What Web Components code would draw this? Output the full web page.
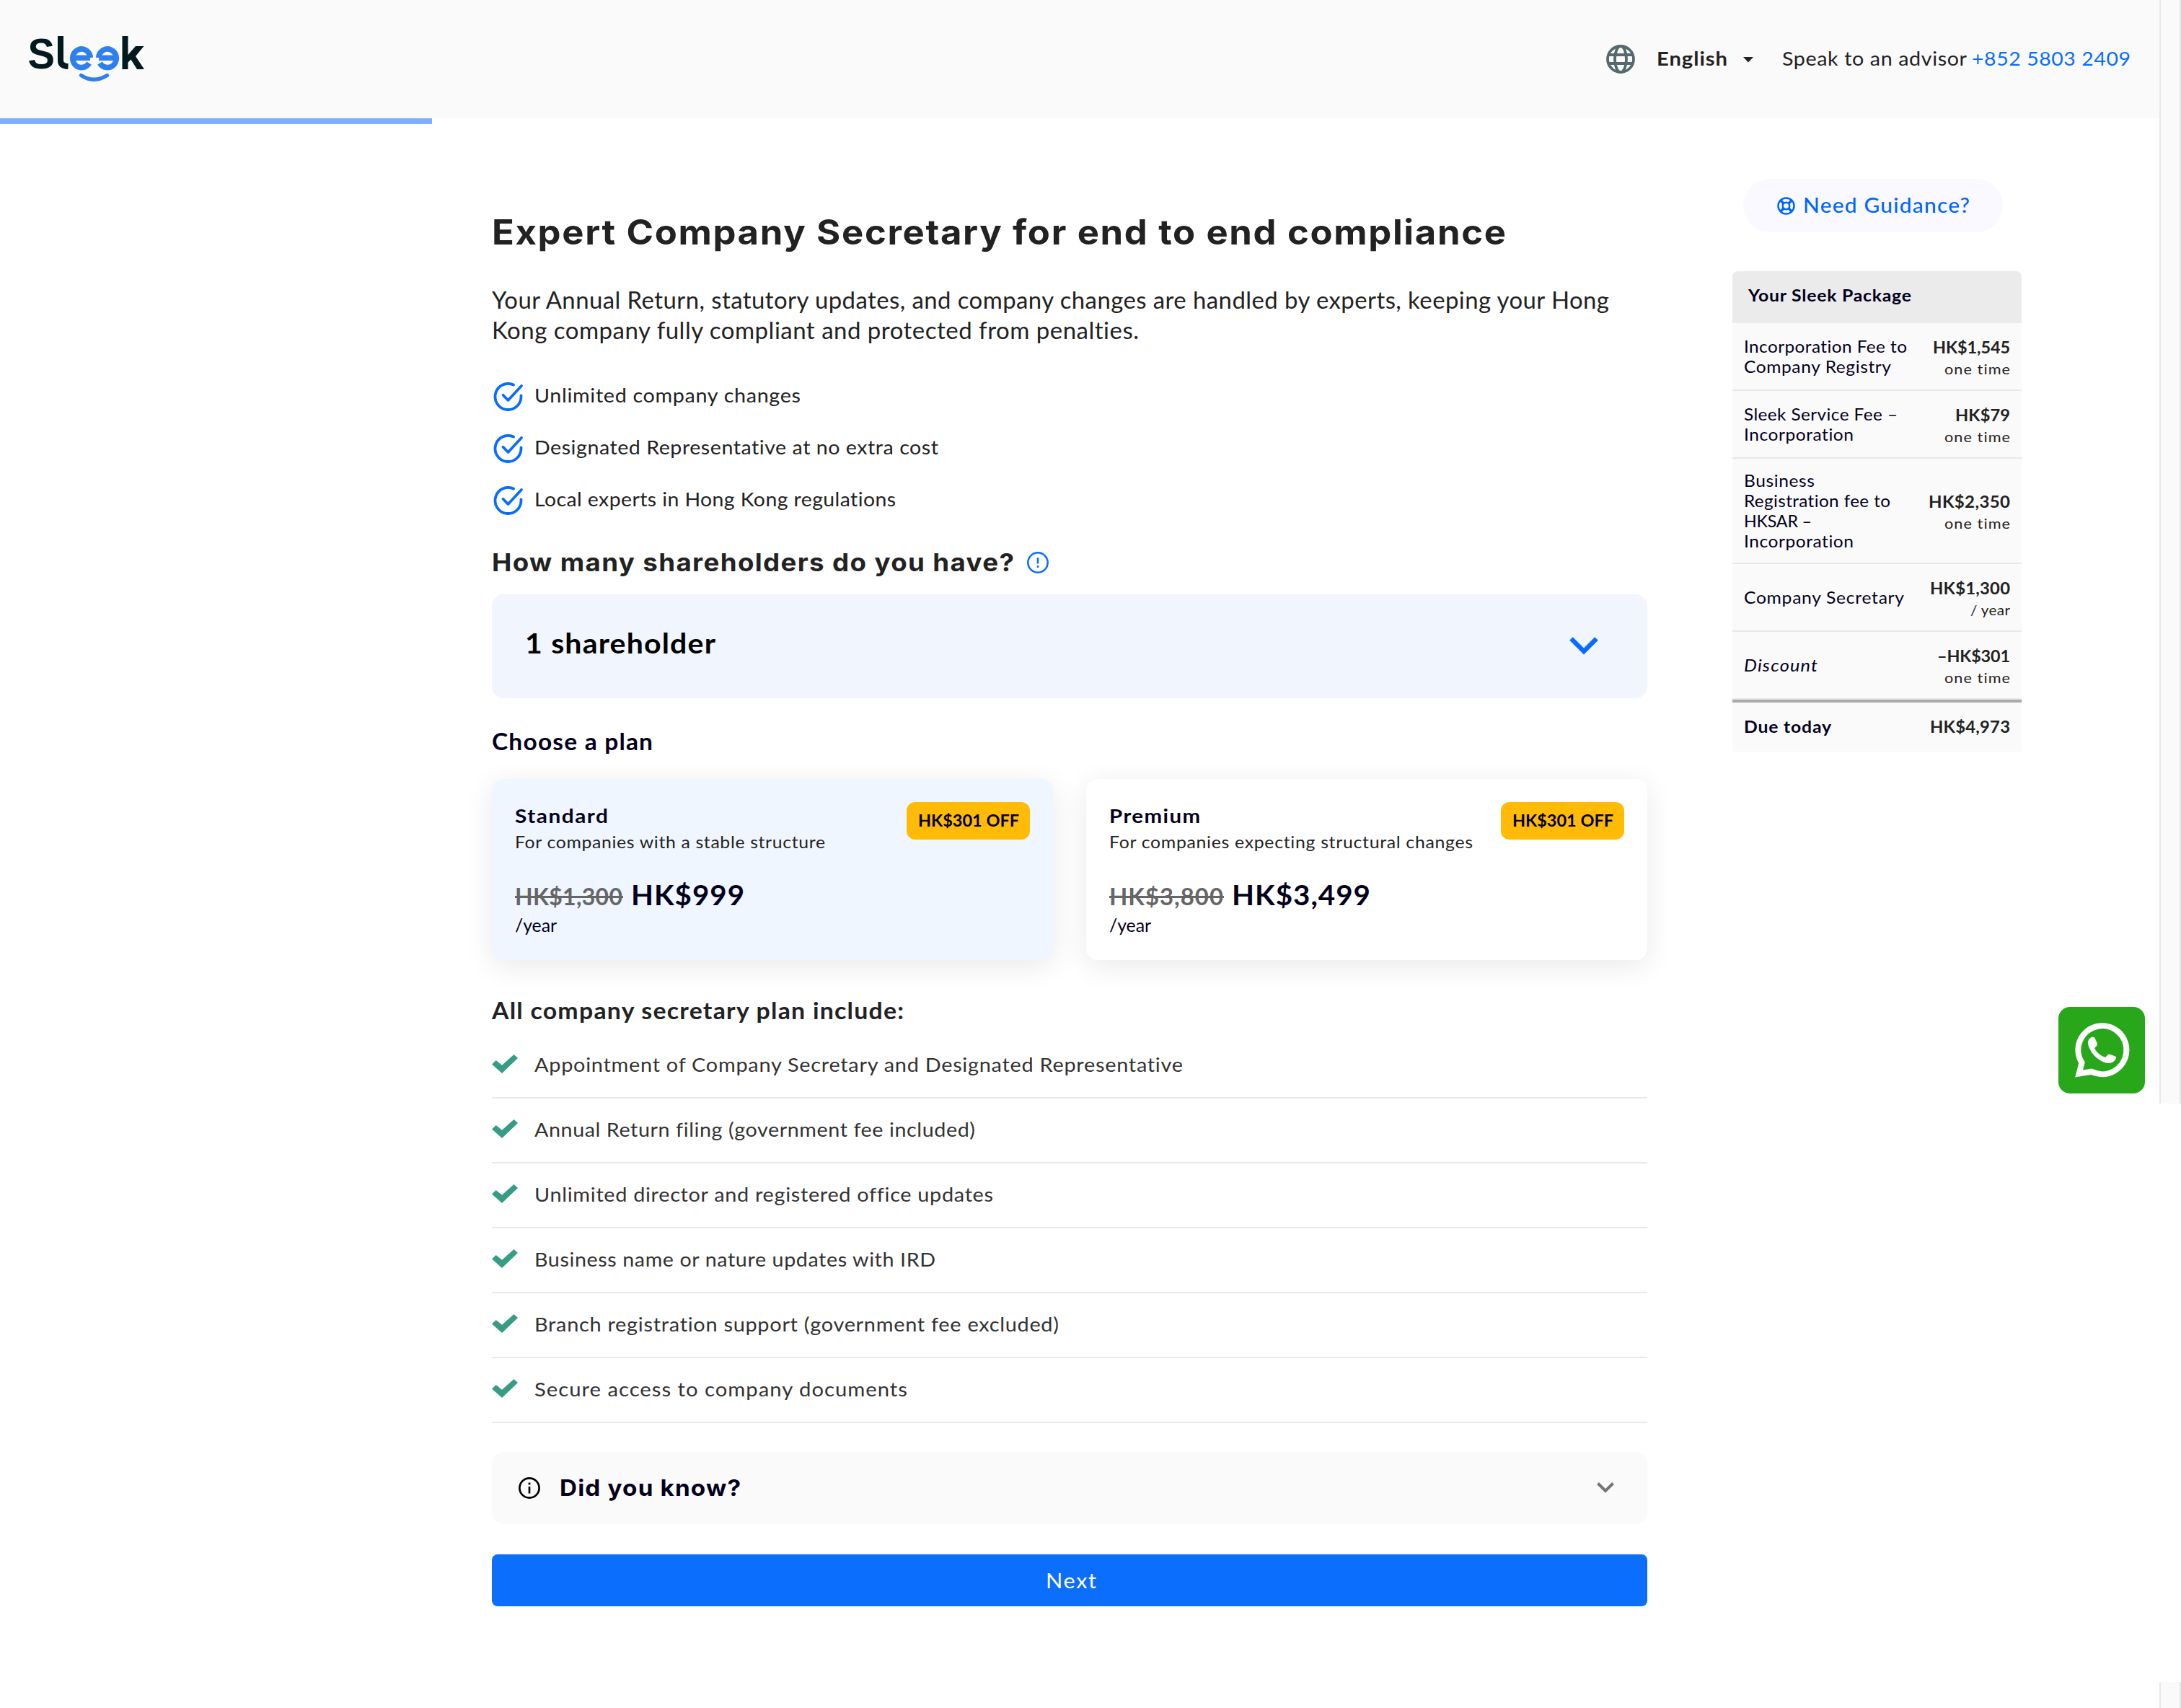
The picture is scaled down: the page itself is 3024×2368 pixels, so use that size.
<!DOCTYPE html>
<html lang="en">
<head>
<meta charset="utf-8">
<title>Sleek - Company Secretary</title>
<style>
  body {
    margin: 0;
    display: flex;
    background: #fff;
    color: #222;
    font-family: Lato, "Open Sans", sans-serif;
    font-variant-ligatures: none;
    --heading-font: Inter, "Open Sans", sans-serif;
    --ink: #03001c;
    --blue: #0a6cff;
  }
</style>
</head>
<body>
<sleek-page></sleek-page>
<scroll-rail></scroll-rail>
<whatsapp-button></whatsapp-button>

<script>
function define(name, html) {
  customElements.define(name, class extends HTMLElement {
    constructor() {
      super();
      this.attachShadow({ mode: 'open' });
      this.shadowRoot.innerHTML = html;
    }
  });
}

// One line of text that fills the given width: half by tracking, half by scaling
class FitText extends HTMLElement {
  constructor() {
    super();
    this.attachShadow({ mode: 'open' });
    this.shadowRoot.innerHTML = `
      <style>
        :host { display: block; white-space: nowrap; }
        span { display: inline-block; line-height: inherit; vertical-align: top; transform-origin: 0 0; }
      </style>
      <span><slot></slot></span>
    `;
  }

  connectedCallback() {
    const width = Number(this.getAttribute('w'));
    const count = this.textContent.length;
    const span = this.shadowRoot.querySelector('span');
    const natural = span.getBoundingClientRect().width;
    if (!width || !natural || count < 2) return;
    const spacing = (width - natural) / 2 / (count - 1);
    const scale = width / (natural + spacing * (count - 1));
    this.style.width = `${width}px`;
    span.style.letterSpacing = `${spacing.toFixed(3)}px`;
    span.style.marginRight = `${(-spacing).toFixed(3)}px`;
    span.style.transform = `scaleX(${scale.toFixed(4)})`;
  }
}

define('sleek-logo', `
  <style>
    :host { display: block; width: 168px; height: 104px; margin-left: 38px; }
    text { font: 700 60px "Liberation Sans", sans-serif; fill: #001a1f; }
  </style>
  <svg width="168" height="104" viewBox="38 30 168 104">
    <text x="38.5" y="95" textLength="37.5" lengthAdjust="spacingAndGlyphs">S</text>
    <path d="M84 50V84Q84 91.500 94.500 92" fill="none" stroke="#001a1f" stroke-width="8"/>
    <g fill="none" stroke="#2f80ed" stroke-width="7.6">
      <path d="M125 80.3H101M125.300 80A12.300 12.800 0 1 0 123.500 87.500"/>
      <path d="M137 80.3H161M136.700 80A12.300 12.800 0 1 1 138.500 87.500"/>
      <path d="M112.500 104.500Q130 116 148.500 104.500" stroke-width="5.200" stroke-linecap="round"/>
    </g>
    <path d="M173.500 50V96" fill="none" stroke="#001a1f" stroke-width="8"/>
    <path d="M188 64H199.500L188 78L200 96H190L181.500 82.500L177 87V76.500Z" fill="#001a1f"/>
  </svg>
`);

define('page-header', `
  <style>
    :host { display: block; }
    header { height: 164px; background: #fafafa; display: flex; align-items: center; }
    .right { margin-left: auto; display: flex; align-items: center; height: 100%; margin-right: 40px; font-size: 27.5px; line-height: 34px; }
    .right svg { display: block; }
    fit-text { margin-bottom: 3px; }
    .lang { margin-left: 30px; font-weight: 700; }
    .caret { margin: 2px 40px 0 22px; }
    .phone { margin-left: 7px; color: var(--blue); }
    .progress { width: 599px; height: 8px; background: #7eb0ff; }
  </style>
  <header>
    <sleek-logo></sleek-logo>
    <div class="right">
      <svg width="40" height="40" viewBox="0 0 40 40" fill="none" stroke="#546a6e" stroke-width="3.800">
        <circle cx="20" cy="20" r="18"/><ellipse cx="20" cy="20" rx="8" ry="18"/><path d="M3.500 14H36.500M3.500 26H36.500"/>
      </svg>
      <fit-text class="lang" w="98">English</fit-text>
      <svg class="caret" width="14" height="8"><path d="M0 0H14L7 7.500Z" fill="#222"/></svg>
      <fit-text w="256">Speak to an advisor</fit-text>
      <fit-text class="phone" w="220">+852 5803 2409</fit-text>
    </div>
  </header>
  <div class="progress"></div>
`);

define('benefit-item', `
  <style>
    :host { display: flex; align-items: center; height: 40px; font-size: 27.5px; line-height: 34px; }
    svg { width: 44px; height: 40px; margin: 0 15px 1px 0; }
    ::slotted(fit-text) { padding-bottom: 5px; }
  </style>
  <svg viewBox="0 0 44 40" fill="none" stroke="#0a6cff" stroke-width="3.800" stroke-linecap="round" stroke-linejoin="round">
    <path d="M40.500 18.500V20A18 18 0 1 1 30 3.600"/><path d="M15.500 17.800L22.500 25L41 5"/>
  </svg>
  <slot></slot>
`);

define('shareholder-select', `
  <style>
    :host {
      display: flex; align-items: center; justify-content: space-between;
      box-sizing: border-box; height: 144px; padding: 0 68px 0 46px;
      background: #f0f5fe; border-radius: 16px;
      color: #000; font-size: 39px; line-height: 50px; font-weight: 700;
    }
    ::slotted(fit-text) { padding-bottom: 9px; }
  </style>
  <slot></slot>
  <svg width="40" height="25" viewBox="0 0 40 25"><path d="M2.500 2.500L20 20L37.500 2.500" fill="none" stroke="#0a6cff" stroke-width="6.500"/></svg>
`);

define('plan-card', `
  <style>
    :host {
      flex: 1; box-sizing: border-box; height: 251px; padding: 32px;
      display: flex; justify-content: space-between; align-items: flex-start;
      border-radius: 16px; background: #fff; color: var(--ink);
      box-shadow: 0 8px 40px rgba(0, 0, 0, .09);
    }
    :host([selected]) { background: #eff6ff; }
    .info { padding-top: 3px; }
    .name { display: block; font-size: 27.5px; line-height: 32px; font-weight: 700; }
    .about { display: block; margin-top: 3px; font-size: 23.5px; line-height: 34px; color: #222; }
    .prices { display: flex; gap: 12px; margin-top: 31px; line-height: 48px; font-weight: 700; }
    .old { display: block; font-size: 31.500px; padding-top: 4px; color: #666; position: relative; }
    .old::after { content: ""; position: absolute; left: 0; right: -1px; top: 27px; height: 3px; background: #666; }
    .new { display: block; padding-top: 1px; font-size: 39px; }
    .per { display: block; font-size: 25px; line-height: 30px; }
    .off {
      display: flex; justify-content: center; width: 171px; height: 52px;
      border-radius: 12px; background: #ffbb05; font-size: 23.5px; line-height: 50px; font-weight: 700;
    }
  </style>
  <div class="info">
    <slot class="name" name="name"></slot>
    <slot class="about" name="about"></slot>
    <div class="prices"><slot class="old" name="old"></slot><slot class="new" name="new"></slot></div>
    <slot class="per" name="per"></slot>
  </div>
  <slot class="off" name="off"></slot>
`);

define('include-item', `
  <style>
    :host {
      display: flex; align-items: center; box-sizing: border-box; height: 90px;
      border-bottom: 2px solid #e9e9e9; color: #333; font-size: 27.5px; line-height: 34px;
    }
    svg { margin: 0 23px 4px 0; }
    ::slotted(fit-text) { padding-bottom: 2px; }
  </style>
  <svg width="36" height="26" viewBox="0 0 36 26"><path d="M0 13.500L5.700 8L14 14.800L30.500 0L36 5L14 26Z" fill="#379c85"/></svg>
  <slot></slot>
`);

define('did-you-know', `
  <style>
    :host {
      display: flex; align-items: center; box-sizing: border-box; height: 100px; padding: 0 46px 0 37px;
      border-radius: 16px; background: #fafafa; color: var(--ink);
      font: 700 31.500px/42px var(--heading-font);
    }
    .chevron { margin-left: auto; }
    ::slotted(fit-text) { margin-left: 27px; }
  </style>
  <svg width="30" height="30" viewBox="0 0 30 30" fill="none" stroke="#000" stroke-width="2.700">
    <circle cx="15" cy="15" r="13.600"/><path d="M15 13V22.500M15 7.500V10.500"/>
  </svg>
  <slot></slot>
  <svg class="chevron" width="24" height="15" viewBox="0 0 24 15"><path d="M1.500 1.500L12 12L22.500 1.500" fill="none" stroke="#757575" stroke-width="4"/></svg>
`);

define('next-button', `
  <style>
    :host { display: block; }
    button {
      display: flex; align-items: center; justify-content: center; width: 100%; height: 72px; padding: 0;
      border: 0; border-radius: 8px; background: #0b6efd; color: #fff; font: inherit; font-size: 28.500px;
    }
  </style>
  <button><slot></slot></button>
`);

define('secretary-form', `
  <style>
    :host { display: block; width: 1602px; padding-top: 120px; }
    h1, h2, h3, p { margin: 0; }
    h1 { font: 700 48px/60px var(--heading-font); }
    p { margin-top: 43px; font-size: 32px; line-height: 42.4px; }
    .benefits { display: flex; flex-direction: column; gap: 32px; margin-top: 51px; }
    .question { display: flex; align-items: center; gap: 18px; margin: 43px 0 22px; }
    h2 { font: 700 34.500px/44px var(--heading-font); }
    h3 { font-size: 31.500px; line-height: 40px; font-weight: 700; }
    .choose { margin: 40px 0 32px; color: var(--ink); }
    .plans { display: flex; gap: 46px; }
    .all { margin: 50px 0 12px; }
    did-you-know { margin: 40px 0 42px; }
  </style>
  <h1><fit-text w="1406">Expert Company Secretary for end to end compliance</fit-text></h1>
  <p>
    <fit-text w="1549">Your Annual Return, statutory updates, and company changes are handled by experts, keeping your Hong</fit-text>
    <fit-text w="897">Kong company fully compliant and protected from penalties.</fit-text>
  </p>
  <div class="benefits">
    <benefit-item><fit-text w="369">Unlimited company changes</fit-text></benefit-item>
    <benefit-item><fit-text w="560">Designated Representative at no extra cost</fit-text></benefit-item>
    <benefit-item><fit-text w="501">Local experts in Hong Kong regulations</fit-text></benefit-item>
  </div>
  <div class="question">
    <h2><fit-text w="724">How many shareholders do you have?</fit-text></h2>
    <svg width="30" height="30" viewBox="0 0 30 30" fill="none" stroke="#0a6cff" stroke-width="2.500">
      <circle cx="15" cy="15" r="13.700"/><path d="M15 8V16.500M15 19V22"/>
    </svg>
  </div>
  <shareholder-select><fit-text w="264">1 shareholder</fit-text></shareholder-select>
  <h3 class="choose"><fit-text w="223">Choose a plan</fit-text></h3>
  <div class="plans">
    <plan-card selected>
      <fit-text slot="name" w="129">Standard</fit-text>
      <fit-text slot="about" w="430">For companies with a stable structure</fit-text>
      <fit-text slot="old" w="149">HK$1,300</fit-text>
      <fit-text slot="new" w="157">HK$999</fit-text>
      <fit-text slot="per" w="58">/year</fit-text>
      <fit-text slot="off" w="140">HK$301 OFF</fit-text>
    </plan-card>
    <plan-card>
      <fit-text slot="name" w="126">Premium</fit-text>
      <fit-text slot="about" w="504">For companies expecting structural changes</fit-text>
      <fit-text slot="old" w="158">HK$3,800</fit-text>
      <fit-text slot="new" w="192">HK$3,499</fit-text>
      <fit-text slot="per" w="58">/year</fit-text>
      <fit-text slot="off" w="140">HK$301 OFF</fit-text>
    </plan-card>
  </div>
  <h3 class="all"><fit-text w="571">All company secretary plan include:</fit-text></h3>
  <include-item><fit-text w="899">Appointment of Company Secretary and Designated Representative</fit-text></include-item>
  <include-item><fit-text w="611">Annual Return filing (government fee included)</fit-text></include-item>
  <include-item><fit-text w="636">Unlimited director and registered office updates</fit-text></include-item>
  <include-item><fit-text w="556">Business name or nature updates with IRD</fit-text></include-item>
  <include-item><fit-text w="727">Branch registration support (government fee excluded)</fit-text></include-item>
  <include-item><fit-text w="517">Secure access to company documents</fit-text></include-item>
  <did-you-know><fit-text w="251">Did you know?</fit-text></did-you-know>
  <next-button><fit-text w="70">Next</fit-text></next-button>
`);

define('need-guidance', `
  <style>
    :host {
      display: flex; align-items: center; box-sizing: border-box; width: 360px; height: 74px; padding-left: 47px;
      border-radius: 37px; background: #f9f9ff; color: #0066ff; font-size: 28px; line-height: 36px; font-weight: 500;
    }
    fit-text { margin: 0 0 3px 11px; }
  </style>
  <svg width="25" height="25" viewBox="0 0 25 25" fill="none" stroke="#0066ff" stroke-width="2.500">
    <circle cx="12.500" cy="12.500" r="11"/><circle cx="12.500" cy="12.500" r="4.700"/>
    <path d="M4.700 4.700L9 9M20.300 4.700L16 9M4.700 20.300L9 16M20.300 20.300L16 16" stroke-width="3.400"/>
  </svg>
  <fit-text w="231">Need Guidance?</fit-text>
`);

define('package-row', `
  <style>
    :host {
      display: flex; align-items: center; justify-content: space-between; box-sizing: border-box;
      padding: 0 16px; border-bottom: 2px solid #e8e8e8;
      font-size: 23.500px; line-height: 28px; color: var(--ink);
    }
    .label { padding-bottom: 1px; }
    .price { padding-top: 4px; display: flex; flex-direction: column; align-items: flex-end; font-weight: 700; line-height: 30px; color: #222; }
    ::slotted([slot=term]) { font-weight: 400; font-size: 20px; line-height: 30px; }
  </style>
  <div class="label"><slot></slot></div>
  <div class="price"><slot name="price"></slot><slot name="term"></slot></div>
`);

define('package-summary', `
  <style>
    :host { display: block; width: 401px; background: #fafafa; border-radius: 8px 8px 0 0; }
    .title {
      box-sizing: border-box; height: 72px; padding: 18px 0 0 22px; background: #ebebeb; border-radius: 8px 8px 0 0;
      color: var(--ink); font-size: 23.500px; line-height: 30px; font-weight: 700;
    }
    package-row { height: 94px; }
    .tall { height: 146px; }
    .discount fit-text:not([slot]) { font-style: italic; }
    .due {
      display: flex; justify-content: space-between; box-sizing: border-box; height: 72px; padding: 19px 16px 0;
      border-top: 4px solid #aaa; font-size: 23.500px; line-height: 28px; font-weight: 700;
    }
    .due :first-child { color: var(--ink); }
  </style>
  <div class="title"><fit-text w="226">Your Sleek Package</fit-text></div>
  <package-row>
    <fit-text w="226">Incorporation Fee to</fit-text><fit-text w="204">Company Registry</fit-text>
    <fit-text slot="price" w="107">HK$1,545</fit-text><fit-text slot="term" w="91">one time</fit-text>
  </package-row>
  <package-row>
    <fit-text w="213">Sleek Service Fee –</fit-text><fit-text w="152">Incorporation</fit-text>
    <fit-text slot="price" w="76">HK$79</fit-text><fit-text slot="term" w="91">one time</fit-text>
  </package-row>
  <package-row class="tall">
    <fit-text w="98">Business</fit-text><fit-text w="203">Registration fee to</fit-text><fit-text w="94">HKSAR –</fit-text><fit-text w="152">Incorporation</fit-text>
    <fit-text slot="price" w="113">HK$2,350</fit-text><fit-text slot="term" w="91">one time</fit-text>
  </package-row>
  <package-row>
    <fit-text w="222">Company Secretary</fit-text>
    <fit-text slot="price" w="111">HK$1,300</fit-text><fit-text slot="term" w="55">/ year</fit-text>
  </package-row>
  <package-row class="discount">
    <fit-text w="102">Discount</fit-text>
    <fit-text slot="price" w="101">–HK$301</fit-text><fit-text slot="term" w="91">one time</fit-text>
  </package-row>
  <div class="due"><fit-text w="121">Due today</fit-text><fit-text w="111">HK$4,973</fit-text></div>
`);

define('sleek-page', `
  <style>
    :host { display: block; width: 2994px; flex: none; }
    .content { display: flex; align-items: flex-start; gap: 118px; padding-left: 682px; }
    aside { padding-top: 76px; }
    need-guidance { margin: 0 0 54px 15px; }
  </style>
  <page-header></page-header>
  <div class="content">
    <secretary-form></secretary-form>
    <aside>
      <need-guidance></need-guidance>
      <package-summary></package-summary>
    </aside>
  </div>
`);

define('scroll-rail', `
  <style>
    :host { display: flex; flex-direction: column; justify-content: space-between; width: 30px; height: 2368px; }
    div { box-sizing: border-box; height: 1530px; background: #fafafa; border: solid #e8e8e8; border-width: 0 2px; }
    .end { height: 36px; }
  </style>
  <div></div>
  <div class="end"></div>
`);

// Floats over the page
define('whatsapp-button', `
  <style>
    :host { position: absolute; left: 2854px; top: 1396px; width: 120px; height: 120px; border-radius: 16px; background: #28a71a; }
    svg { display: block; }
  </style>
  <svg width="120" height="120" viewBox="0 0 120 120">
    <path d="M32.500 77.500A33.500 33.500 0 1 1 46 89.700L28.600 92.500Z" fill="none" stroke="#fff" stroke-width="8"/>
    <path d="M41 49Q42 43.500 46 42Q50 41 51 44L54 51Q54 54 50 57Q54 66 65 70L69 66Q70 65 72 66L79 68.500Q81 70 79 73Q76 78 69 78C56 77 41 61 41 49Z" fill="#fff"/>
  </svg>
`);

// Registered last so that every stylesheet around it is in place when it measures
customElements.define('fit-text', FitText);
</script>
</body>
</html>
